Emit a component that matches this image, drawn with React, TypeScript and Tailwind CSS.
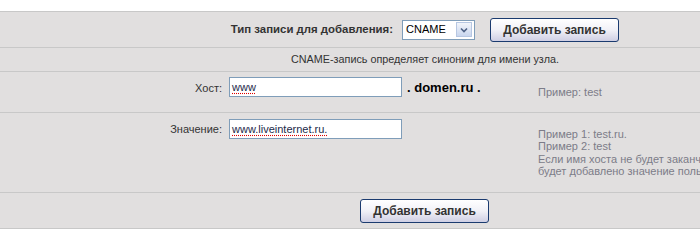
const font = "font-['Liberation_Sans',Arial,sans-serif]";

const AddButton: React.FC = () => (
  <button className="flex h-[24px] w-[129px] items-center justify-center rounded-[3px] border border-[#1b3b6f] bg-gradient-to-b from-white via-[#f1f1f7] to-[#cfcfe4] text-[12px] font-bold text-[#333]">
    Добавить запись
  </button>
);

const FakeInput: React.FC<{ value: string }> = ({ value }) => (
  <div className="flex h-[20px] w-[173px] items-center border border-[#7f9db9] bg-white px-[2px] text-[11px] text-[#1c2a4a]">
    <span className="underline decoration-[#d00] decoration-dotted underline-offset-[2px]">
      {value}
    </span>
  </div>
);

export default function App() {
  return (
    <div className={`${font} h-[246px] w-[700px] overflow-hidden bg-white pt-[11px]`}>
      <div className="border-y border-[#c8c8c8] bg-[#e1dfdf]">
        {/* Тип записи */}
        <div className="flex h-[36px] items-center border-b border-[#c8c8c8]">
          <div className="w-[393px] shrink-0 text-right text-[11.4px] font-bold text-[#333]">
            Тип записи для добавления:
          </div>
          <div className="ml-[9px] flex h-[20px] w-[73px] shrink-0 items-center justify-between border border-[#7f9db9] bg-white pl-[3px] pr-[2px]">
            <span className="text-[11px] text-black">CNAME</span>
            <span className="flex h-[15px] w-[16px] items-center justify-center border border-[#b7c7e2] bg-gradient-to-b from-[#f2f5fb] to-[#c9d6ee]">
              <svg width="8" height="6" viewBox="0 0 8 6">
                <path d="M1 1.5 L4 4.5 L7 1.5" fill="none" stroke="#4d6185" strokeWidth="1.6" />
              </svg>
            </span>
          </div>
          <div className="ml-[15px] shrink-0">
            <AddButton />
          </div>
        </div>

        <div className="flex h-[24px] items-center border-b border-[#c8c8c8] pl-[291px] text-[10.8px] text-[#333]">
          CNAME-запись определяет синоним для имени узла.
        </div>

        {/* Хост */}
        <div className="flex h-[41px] border-b border-[#c8c8c8]">
          <div className="w-[222px] shrink-0 pt-[8px] text-right text-[11px] text-[#333]">Хост:</div>
          <div className="flex w-[316px] shrink-0 items-start pl-[7px] pt-[5px]">
            <FakeInput value="www" />
            <span className="ml-[5px] mt-[1px] text-[13px] font-bold text-black">
              . domen.ru .
            </span>
          </div>
          <div className="flex items-center whitespace-nowrap text-[11px] text-[#7c7c88]">
            Пример: test
          </div>
        </div>

        {/* Значение */}
        <div className="flex h-[80px] border-b border-[#c8c8c8]">
          <div className="w-[222px] shrink-0 pt-[8px] text-right text-[11px] text-[#333]">Значение:</div>
          <div className="w-[316px] shrink-0 pl-[7px] pt-[6px]">
            <FakeInput value="www.liveinternet.ru." />
          </div>
          <div className="flex flex-col justify-center whitespace-nowrap text-[11px] leading-[12.5px] text-[#7c7c88]">
            <span>Пример 1: test.ru.</span>
            <span>Пример 2: test</span>
            <span>Если имя хоста не будет заканчиваться точкой, то к нему</span>
            <span>будет добавлено значение пользователя domen.ru</span>
          </div>
        </div>

        <div className="flex h-[35px] items-center pl-[360px]">
          <AddButton />
        </div>
      </div>
    </div>
  );
}
